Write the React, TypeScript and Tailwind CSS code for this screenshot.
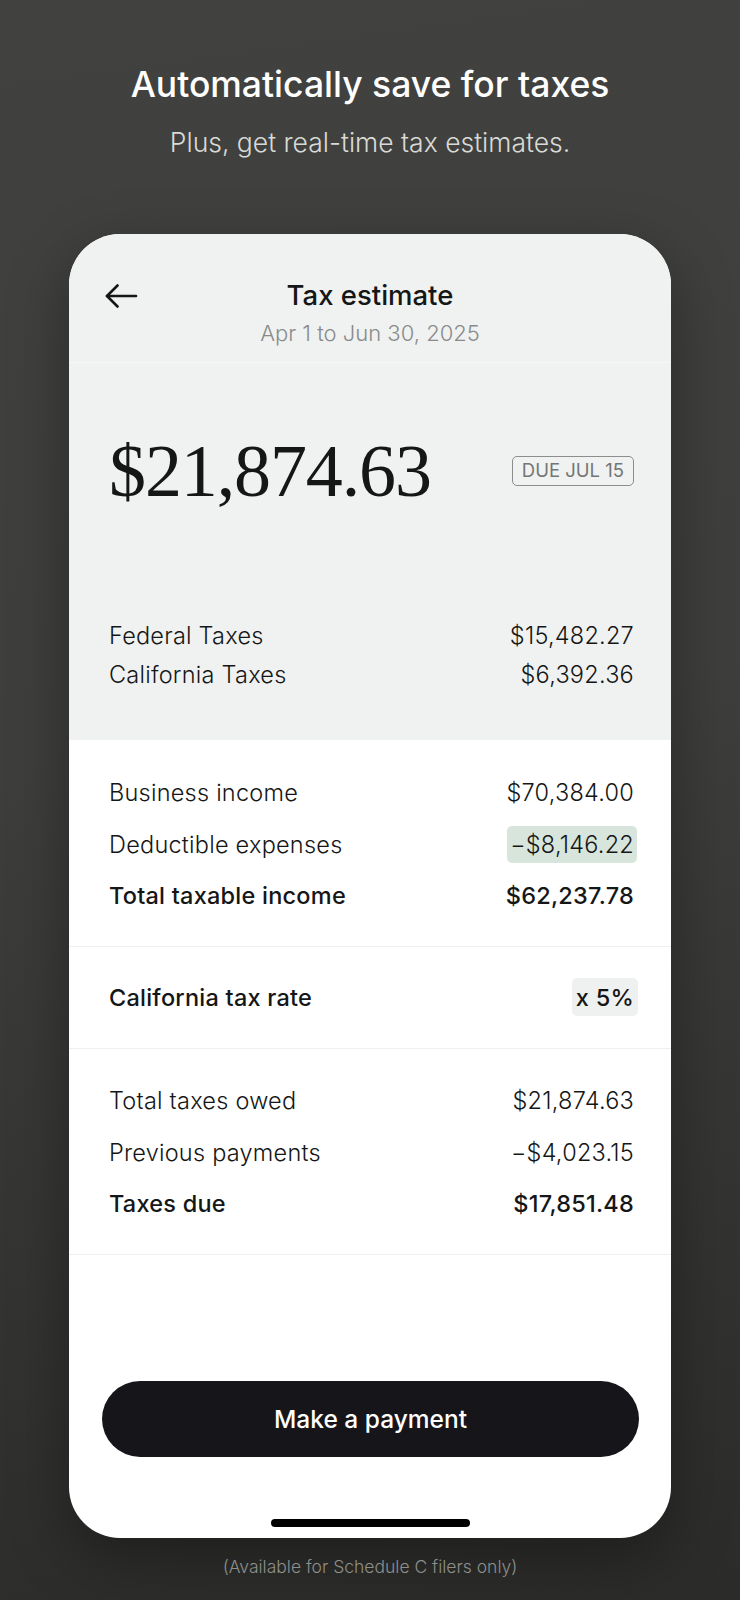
import React from "react";

const sans = "font-['Inter','Roboto',sans-serif]";

type Row = { label: string; value: string; strong?: boolean; tone?: "green" | "gray" };

function LineItem({ label, value, strong, tone }: Row) {
  const weight = strong ? "font-medium" : "font-light";
  const text = `text-[23.5px] tracking-[0.01em] ${weight}`;
  return (
    <div className="flex h-[51.5px] items-center justify-between">
      <span className={text}>{label}</span>
      {tone === "green" ? (
        <span className={`-mr-[3px] flex h-[37px] items-center rounded-[5px] bg-[#d7e5dc] px-[3px] ${text}`}>{value}</span>
      ) : tone === "gray" ? (
        <span className={`-mr-[4px] flex h-[38px] items-center rounded-[5px] bg-[#eff1f0] px-[4px] ${text}`}>{value}</span>
      ) : (
        <span className={text}>{value}</span>
      )}
    </div>
  );
}

const income: Row[] = [
  { label: "Business income", value: "$70,384.00" },
  { label: "Deductible expenses", value: "−$8,146.22", tone: "green" },
  { label: "Total taxable income", value: "$62,237.78", strong: true },
];

const owed: Row[] = [
  { label: "Total taxes owed", value: "$21,874.63" },
  { label: "Previous payments", value: "−$4,023.15" },
  { label: "Taxes due", value: "$17,851.48", strong: true },
];

export default function App() {
  return (
    <div
      className={`${sans} flex min-h-[1600px] w-full flex-col items-center bg-[linear-gradient(172deg,#41423f_0%,#3e3f3d_45%,#2b2c2a_100%)] pt-[65px] text-[#151616]`}
    >
      <h1 className="text-[35.5px] font-medium leading-[40px] text-white">Automatically save for taxes</h1>
      <p className="mt-[22px] text-[26.5px] font-light leading-[30px] text-[#d9dad6]">Plus, get real-time tax estimates.</p>

      {/* phone card */}
      <div className="mt-[77px] flex h-[1304px] w-[602px] flex-col overflow-hidden rounded-[51px] bg-white shadow-[0_20px_60px_rgba(0,0,0,0.35)]">
        <div className="bg-[#f0f2f1]">
          <div className="grid grid-cols-[1fr_auto_1fr] border-b border-[#f6f7f6] pb-[16px] pt-[45px]">
            <div className="pl-[36px] pt-[5px]">
              <svg width="33" height="24" viewBox="0 0 33 24" fill="none" stroke="#151616" strokeWidth="2.6" strokeLinecap="round" strokeLinejoin="round">
                <path d="M31 12H2" />
                <path d="M12.5 1.5L2 12l10.5 10.5" />
              </svg>
            </div>
            <div className="flex flex-col items-center">
              <span className="text-[27.5px] font-medium leading-[32px]">Tax estimate</span>
              <span className="mt-[9px] text-[22px] font-light leading-[26px] text-[#898b8a]">Apr 1 to Jun 30, 2025</span>
            </div>
            <div />
          </div>

          <div className="pb-[46px] pl-10 pr-[37px] pt-[68px]">
            <div className="flex h-[80px] items-center justify-between">
              <span className="font-['Liberation_Serif','Times_New_Roman',serif] text-[74px] leading-[80px] tracking-[-0.015em]">
                $21,874.63
              </span>
              <span className="flex h-[30px] items-center rounded-[5px] border-[1.5px] border-[#8c8e8d] px-[9px] text-[18.5px] font-normal text-[#747675]">
                DUE JUL 15
              </span>
            </div>
            <div className="mt-[105px] flex flex-col">
              <div className="flex h-[39px] items-center justify-between text-[23.5px] font-light tracking-[0.01em]">
                <span>Federal Taxes</span>
                <span>$15,482.27</span>
              </div>
              <div className="flex h-[39px] items-center justify-between text-[23.5px] font-light tracking-[0.01em]">
                <span>California Taxes</span>
                <span>$6,392.36</span>
              </div>
            </div>
          </div>
        </div>

        <div className="border-b border-[#eeefee] pb-[24px] pl-10 pr-[37px] pt-[27px]">
          {income.map((r) => (
            <LineItem key={r.label} {...r} />
          ))}
        </div>

        <div className="border-b border-[#eeefee] py-[25px] pl-10 pr-[37px]">
          <LineItem label="California tax rate" value="x 5%" strong tone="gray" />
        </div>

        <div className="border-b border-[#eeefee] pb-[24px] pl-10 pr-[37px] pt-[26px]">
          {owed.map((r) => (
            <LineItem key={r.label} {...r} />
          ))}
        </div>

        <div className="flex-1" />

        <div className="pl-[33px] pr-[32px]">
          <button className="flex h-[76px] w-full items-center justify-center rounded-full bg-[#16161a] text-[24.5px] font-medium text-white">
            Make a payment
          </button>
        </div>
        <div className="flex justify-center pb-[11px] pt-[62px]">
          <div className="h-[8px] w-[199px] rounded-full bg-black" />
        </div>
      </div>

      <p className="mt-[17px] text-[17.5px] font-light leading-[24px] text-[#8e8f8b]">(Available for Schedule C filers only)</p>
    </div>
  );
}
